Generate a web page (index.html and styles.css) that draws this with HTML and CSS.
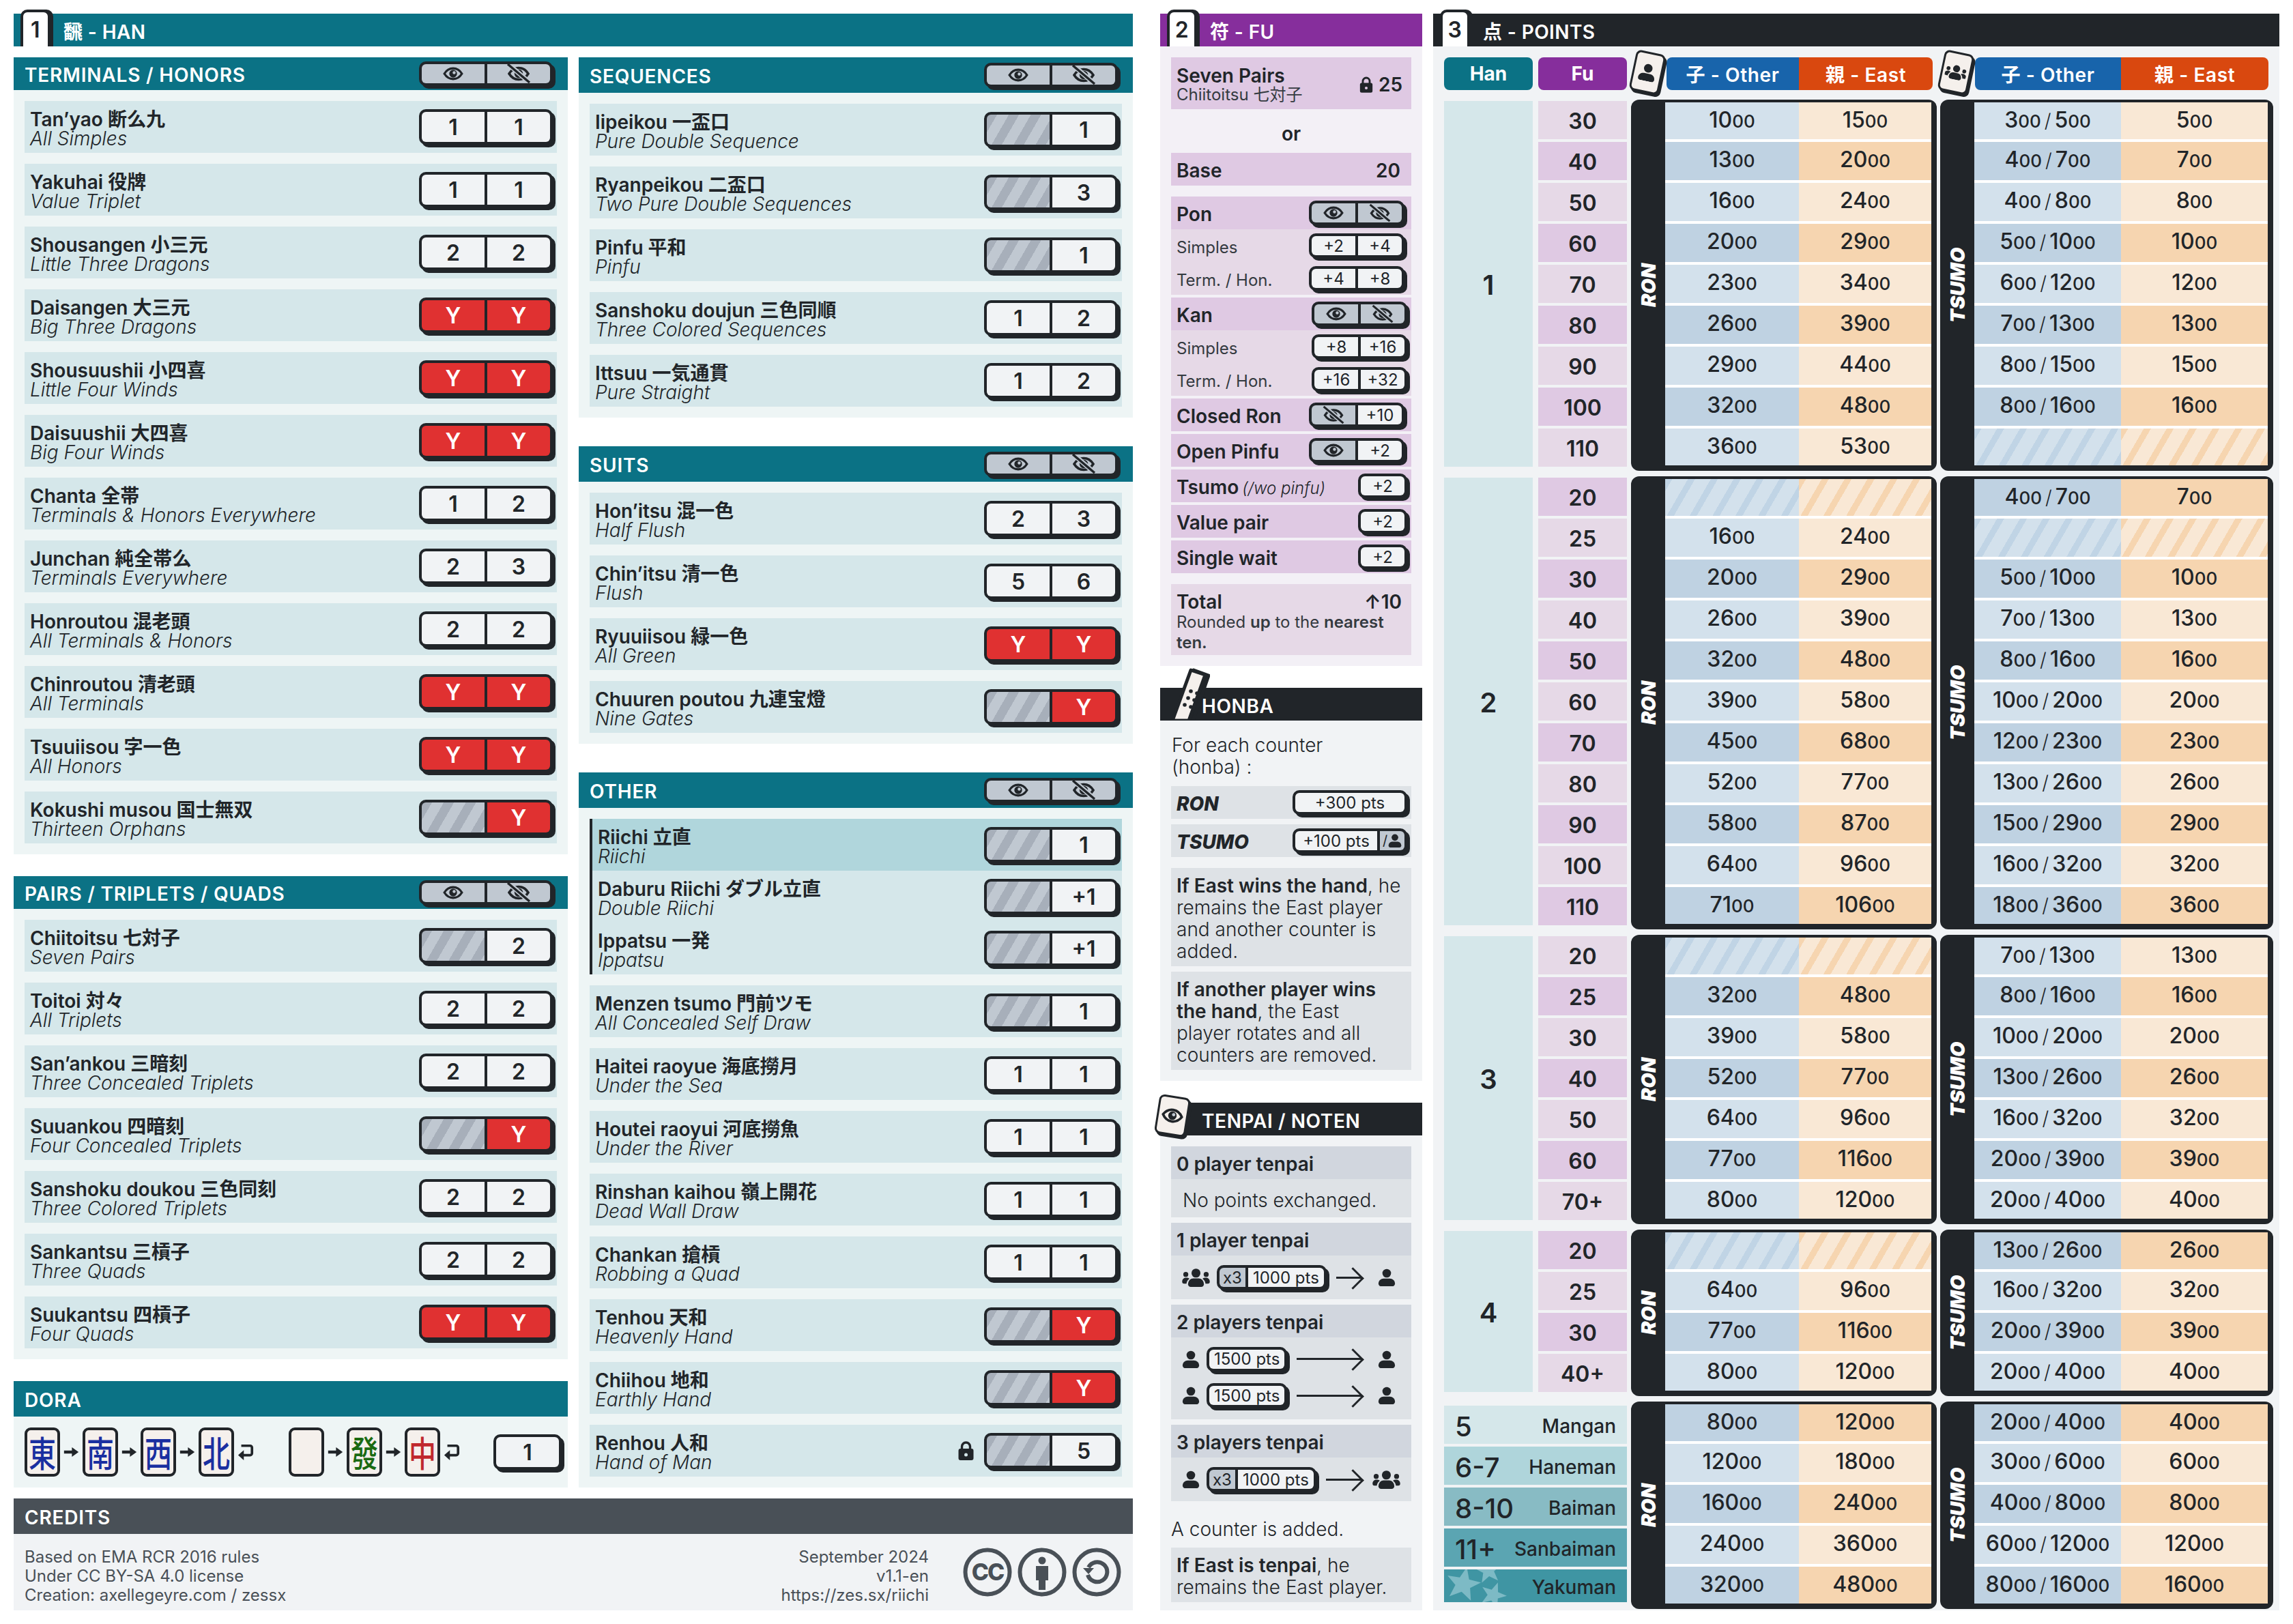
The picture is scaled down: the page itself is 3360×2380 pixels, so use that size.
FILE: index.html
```html
<!DOCTYPE html>
<html lang="en">

<head>
    <meta charset="UTF-8">
    <title>Riichi cheat sheet</title>
    <link rel="stylesheet" href="styles.css">
</head>

<body>
    <svg class="defs" width="0" height="0">
        <symbol id="eye" viewBox="0 0 32 24">
            <path d="M2 12C6 5.500 10.500 3.500 16 3.500s10 2 14 8.500c-4 6.500-8.500 8.500-14 8.500S6 18.500 2 12z" fill="none" stroke="currentColor" stroke-width="3.600" />
            <circle cx="16" cy="12" r="6.200" fill="currentColor" />
            <circle cx="17.600" cy="10.400" r="2.400" fill="#c0c8d1" />
        </symbol>
        <symbol id="eye-off" viewBox="0 0 40 30" overflow="visible">
            <path d="M6 15C10 8.500 14.500 6.500 20 6.500s10 2 14 8.500c-4 6.500-8.500 8.500-14 8.500S10 21.500 6 15z" fill="none" stroke="currentColor" stroke-width="3.600" />
            <circle cx="20" cy="15" r="6.200" fill="currentColor" />
            <path d="M5 1l31 27" stroke="#c0c8d1" stroke-width="7" />
            <path d="M4 1l32 27" stroke="currentColor" stroke-width="3.400" />
        </symbol>
        <symbol id="person" viewBox="0 0 28 28">
            <circle cx="14" cy="7.500" r="6.800" fill="currentColor" />
            <path d="M1 24c0-5 4-8 8-8h10c4 0 8 3 8 8 0 2-1.500 4-3.500 4h-19C2.500 28 1 26 1 24z" fill="currentColor" />
        </symbol>
        <symbol id="group" viewBox="0 0 42 28">
            <circle cx="21" cy="7" r="6.800" fill="currentColor" />
            <circle cx="5.500" cy="9" r="3.800" fill="currentColor" />
            <circle cx="36.500" cy="9" r="3.800" fill="currentColor" />
            <path d="M9 24c0-6 4-9 8-9h8c4 0 8 3 8 9 0 2-2 4-4 4H13c-2 0-4-2-4-4z" fill="currentColor" />
            <path d="M0 20c0-4 3-6 6-6 2 0 4 .5 5 1.500-2.500 2-4 4-4.500 7.500H3c-2 0-3-1-3-3z" fill="currentColor" />
            <path d="M42 20c0-4-3-6-6-6-2 0-4 .5-5 1.500 2.500 2 4 4 4.500 7.500H39c2 0 3-1 3-3z" fill="currentColor" />
        </symbol>
        <symbol id="lock" viewBox="0 0 24 28">
            <path d="M6 13V8a6 6 0 0 1 12 0v5" fill="none" stroke="currentColor" stroke-width="3.400" />
            <path fill-rule="evenodd" d="M4 11h16a3 3 0 0 1 3 3v11a3 3 0 0 1-3 3H4a3 3 0 0 1-3-3V14a3 3 0 0 1 3-3zm8 6.500a2.500 2.500 0 1 0 0 5 2.500 2.500 0 0 0 0-5z" fill="currentColor" />
        </symbol>
        <symbol id="next" viewBox="0 0 24 18">
            <path d="M0 9h15" stroke="currentColor" stroke-width="5" />
            <path d="M13 1l11 8-11 8z" fill="currentColor" />
        </symbol>
        <symbol id="back" viewBox="0 0 26 26">
            <path d="M6 3h14a3 3 0 0 1 3 3v9a3 3 0 0 1-3 3H8" fill="none" stroke="currentColor" stroke-width="4" />
            <path d="M10 10L1 18l9 8z" fill="currentColor" />
        </symbol>
    </svg>

    <main class="sheet">

        <section class="sec sec-han">
            <h1 class="band teal"><span class="tab">1</span>飜 - HAN</h1>
            <div class="cols">
                <div class="col col-a">
                    <div class="panel">
                        <h2 class="phead">TERMINALS / HONORS
                            <span class="pill"><span class="c h"><svg class="ico-eye"><use href="#eye" /></svg></span><span class="c h"><svg class="ico-off"><use href="#eye-off" /></svg></span></span>
                        </h2>
                        <div class="pbody">
                            <div class="row"><div class="txt"><b>Tan’yao 断么九</b><i>All Simples</i></div><div class="pill"><span class="c">1</span><span class="c">1</span></div></div>
                            <div class="row"><div class="txt"><b>Yakuhai 役牌</b><i>Value Triplet</i></div><div class="pill"><span class="c">1</span><span class="c">1</span></div></div>
                            <div class="row"><div class="txt"><b>Shousangen 小三元</b><i>Little Three Dragons</i></div><div class="pill"><span class="c">2</span><span class="c">2</span></div></div>
                            <div class="row"><div class="txt"><b>Daisangen 大三元</b><i>Big Three Dragons</i></div><div class="pill"><span class="c y">Y</span><span class="c y">Y</span></div></div>
                            <div class="row"><div class="txt"><b>Shousuushii 小四喜</b><i>Little Four Winds</i></div><div class="pill"><span class="c y">Y</span><span class="c y">Y</span></div></div>
                            <div class="row"><div class="txt"><b>Daisuushii 大四喜</b><i>Big Four Winds</i></div><div class="pill"><span class="c y">Y</span><span class="c y">Y</span></div></div>
                            <div class="row"><div class="txt"><b>Chanta 全帯</b><i>Terminals &amp; Honors Everywhere</i></div><div class="pill"><span class="c">1</span><span class="c">2</span></div></div>
                            <div class="row"><div class="txt"><b>Junchan 純全帯么</b><i>Terminals Everywhere</i></div><div class="pill"><span class="c">2</span><span class="c">3</span></div></div>
                            <div class="row"><div class="txt"><b>Honroutou 混老頭</b><i>All Terminals &amp; Honors</i></div><div class="pill"><span class="c">2</span><span class="c">2</span></div></div>
                            <div class="row"><div class="txt"><b>Chinroutou 清老頭</b><i>All Terminals</i></div><div class="pill"><span class="c y">Y</span><span class="c y">Y</span></div></div>
                            <div class="row"><div class="txt"><b>Tsuuiisou 字一色</b><i>All Honors</i></div><div class="pill"><span class="c y">Y</span><span class="c y">Y</span></div></div>
                            <div class="row"><div class="txt"><b>Kokushi musou 国士無双</b><i>Thirteen Orphans</i></div><div class="pill"><span class="c off"></span><span class="c y">Y</span></div></div>
                        </div>
                    </div>

                    <div class="panel">
                        <h2 class="phead">PAIRS / TRIPLETS / QUADS
                            <span class="pill"><span class="c h"><svg class="ico-eye"><use href="#eye" /></svg></span><span class="c h"><svg class="ico-off"><use href="#eye-off" /></svg></span></span>
                        </h2>
                        <div class="pbody">
                            <div class="row"><div class="txt"><b>Chiitoitsu 七対子</b><i>Seven Pairs</i></div><div class="pill"><span class="c off"></span><span class="c">2</span></div></div>
                            <div class="row"><div class="txt"><b>Toitoi 対々</b><i>All Triplets</i></div><div class="pill"><span class="c">2</span><span class="c">2</span></div></div>
                            <div class="row"><div class="txt"><b>San’ankou 三暗刻</b><i>Three Concealed Triplets</i></div><div class="pill"><span class="c">2</span><span class="c">2</span></div></div>
                            <div class="row"><div class="txt"><b>Suuankou 四暗刻</b><i>Four Concealed Triplets</i></div><div class="pill"><span class="c off"></span><span class="c y">Y</span></div></div>
                            <div class="row"><div class="txt"><b>Sanshoku doukou 三色同刻</b><i>Three Colored Triplets</i></div><div class="pill"><span class="c">2</span><span class="c">2</span></div></div>
                            <div class="row"><div class="txt"><b>Sankantsu 三槓子</b><i>Three Quads</i></div><div class="pill"><span class="c">2</span><span class="c">2</span></div></div>
                            <div class="row"><div class="txt"><b>Suukantsu 四槓子</b><i>Four Quads</i></div><div class="pill"><span class="c y">Y</span><span class="c y">Y</span></div></div>
                        </div>
                    </div>

                    <div class="panel">
                        <h2 class="phead tall">DORA</h2>
                        <div class="dora">
                            <span class="mj"><span>東</span></span><svg class="nx"><use href="#next" /></svg>
                            <span class="mj"><span>南</span></span><svg class="nx"><use href="#next" /></svg>
                            <span class="mj"><span>西</span></span><svg class="nx"><use href="#next" /></svg>
                            <span class="mj"><span>北</span></span><svg class="bk"><use href="#back" /></svg>
                            <span class="mj white"></span><svg class="nx"><use href="#next" /></svg>
                            <span class="mj green"><span>發</span></span><svg class="nx"><use href="#next" /></svg>
                            <span class="mj red"><span>中</span></span><svg class="bk"><use href="#back" /></svg>
                            <span class="pill one"><span class="c">1</span></span>
                        </div>
                    </div>
                </div>

                <div class="col col-b">
                    <div class="panel">
                        <h2 class="phead tall">SEQUENCES
                            <span class="pill"><span class="c h"><svg class="ico-eye"><use href="#eye" /></svg></span><span class="c h"><svg class="ico-off"><use href="#eye-off" /></svg></span></span>
                        </h2>
                        <div class="pbody">
                            <div class="row"><div class="txt"><b>Iipeikou 一盃口</b><i>Pure Double Sequence</i></div><div class="pill"><span class="c off"></span><span class="c">1</span></div></div>
                            <div class="row"><div class="txt"><b>Ryanpeikou 二盃口</b><i>Two Pure Double Sequences</i></div><div class="pill"><span class="c off"></span><span class="c">3</span></div></div>
                            <div class="row"><div class="txt"><b>Pinfu 平和</b><i>Pinfu</i></div><div class="pill"><span class="c off"></span><span class="c">1</span></div></div>
                            <div class="row"><div class="txt"><b>Sanshoku doujun 三色同順</b><i>Three Colored Sequences</i></div><div class="pill"><span class="c">1</span><span class="c">2</span></div></div>
                            <div class="row"><div class="txt"><b>Ittsuu 一気通貫</b><i>Pure Straight</i></div><div class="pill"><span class="c">1</span><span class="c">2</span></div></div>
                        </div>
                    </div>

                    <div class="panel">
                        <h2 class="phead tall">SUITS
                            <span class="pill"><span class="c h"><svg class="ico-eye"><use href="#eye" /></svg></span><span class="c h"><svg class="ico-off"><use href="#eye-off" /></svg></span></span>
                        </h2>
                        <div class="pbody">
                            <div class="row"><div class="txt"><b>Hon’itsu 混一色</b><i>Half Flush</i></div><div class="pill"><span class="c">2</span><span class="c">3</span></div></div>
                            <div class="row"><div class="txt"><b>Chin’itsu 清一色</b><i>Flush</i></div><div class="pill"><span class="c">5</span><span class="c">6</span></div></div>
                            <div class="row"><div class="txt"><b>Ryuuiisou 緑一色</b><i>All Green</i></div><div class="pill"><span class="c y">Y</span><span class="c y">Y</span></div></div>
                            <div class="row"><div class="txt"><b>Chuuren poutou 九連宝燈</b><i>Nine Gates</i></div><div class="pill"><span class="c off"></span><span class="c y">Y</span></div></div>
                        </div>
                    </div>

                    <div class="panel">
                        <h2 class="phead tall">OTHER
                            <span class="pill"><span class="c h"><svg class="ico-eye"><use href="#eye" /></svg></span><span class="c h"><svg class="ico-off"><use href="#eye-off" /></svg></span></span>
                        </h2>
                        <div class="pbody">
                            <div class="riichi">
                                <div class="row hi"><div class="txt"><b>Riichi 立直</b><i>Riichi</i></div><div class="pill"><span class="c off"></span><span class="c">1</span></div></div>
                                <div class="row"><div class="txt"><b>Daburu Riichi ダブル立直</b><i>Double Riichi</i></div><div class="pill"><span class="c off"></span><span class="c">+1</span></div></div>
                                <div class="row"><div class="txt"><b>Ippatsu 一発</b><i>Ippatsu</i></div><div class="pill"><span class="c off"></span><span class="c">+1</span></div></div>
                            </div>
                            <div class="row"><div class="txt"><b>Menzen tsumo 門前ツモ</b><i>All Concealed Self Draw</i></div><div class="pill"><span class="c off"></span><span class="c">1</span></div></div>
                            <div class="row"><div class="txt"><b>Haitei raoyue 海底撈月</b><i>Under the Sea</i></div><div class="pill"><span class="c">1</span><span class="c">1</span></div></div>
                            <div class="row"><div class="txt"><b>Houtei raoyui 河底撈魚</b><i>Under the River</i></div><div class="pill"><span class="c">1</span><span class="c">1</span></div></div>
                            <div class="row"><div class="txt"><b>Rinshan kaihou 嶺上開花</b><i>Dead Wall Draw</i></div><div class="pill"><span class="c">1</span><span class="c">1</span></div></div>
                            <div class="row"><div class="txt"><b>Chankan 搶槓</b><i>Robbing a Quad</i></div><div class="pill"><span class="c">1</span><span class="c">1</span></div></div>
                            <div class="row"><div class="txt"><b>Tenhou 天和</b><i>Heavenly Hand</i></div><div class="pill"><span class="c off"></span><span class="c y">Y</span></div></div>
                            <div class="row"><div class="txt"><b>Chiihou 地和</b><i>Earthly Hand</i></div><div class="pill"><span class="c off"></span><span class="c y">Y</span></div></div>
                            <div class="row"><div class="txt"><b>Renhou 人和</b><i>Hand of Man</i></div><svg class="ico-lock"><use href="#lock" /></svg><div class="pill"><span class="c off"></span><span class="c">5</span></div></div>
                        </div>
                    </div>
                </div>
            </div>

            <div class="credits">
                <h2 class="phead tall">CREDITS</h2>
                <div class="cbody">
                    <p>Based on EMA RCR 2016 rules<br>Under CC BY-SA 4.0 license<br>Creation: axellegeyre.com / zessx</p>
                    <p class="cright">September 2024<br>v1.1-en<br>https://zes.sx/riichi</p>
                    <div class="cc">
                        <svg viewBox="0 0 72 72"><circle cx="36" cy="36" r="32.500" fill="none" stroke="#495057" stroke-width="6" /><text x="36" y="48" text-anchor="middle" class="cc-t">CC</text></svg>
                        <svg viewBox="0 0 72 72"><circle cx="36" cy="36" r="32.500" fill="none" stroke="#495057" stroke-width="6" /><circle cx="36" cy="19" r="5.500" fill="#495057" /><path d="M27 27h18v21h-4v14H31V48h-4z" fill="#495057" /></svg>
                        <svg viewBox="0 0 72 72"><circle cx="36" cy="36" r="32.500" fill="none" stroke="#495057" stroke-width="6" /><path d="M23 40a14.500 14.500 0 1 0 1-11" fill="none" stroke="#495057" stroke-width="6" /><path d="M16 30h16l-8 9z" fill="#495057" /></svg>
                    </div>
                </div>
            </div>
        </section>

        <section class="sec sec-fu">
            <h1 class="band grape"><span class="tab">2</span>符 - FU</h1>
            <div class="fubody">
                <div class="fr dk r76"><div class="txt"><b>Seven Pairs</b><small>Chiitoitsu 七対子</small></div><b class="val"><svg class="ico-lock sm"><use href="#lock" /></svg>25</b></div>
                <div class="fr-or">or</div>
                <div class="fr dk"><b>Base</b><b class="val base">20</b></div>

                <div class="fgroup mt16">
                    <div class="fr dk"><b>Pon</b><span class="pill mini"><span class="c h"><svg class="ico-eye"><use href="#eye" /></svg></span><span class="c h"><svg class="ico-off"><use href="#eye-off" /></svg></span></span></div>
                    <div class="fr lt"><small>Simples</small><span class="pill mini"><span class="c">+2</span><span class="c">+4</span></span></div>
                    <div class="fr lt"><small>Term. / Hon.</small><span class="pill mini"><span class="c">+4</span><span class="c">+8</span></span></div>
                </div>
                <div class="fgroup far">
                    <div class="fr dk"><b>Kan</b><span class="pill mini"><span class="c h"><svg class="ico-eye"><use href="#eye" /></svg></span><span class="c h"><svg class="ico-off"><use href="#eye-off" /></svg></span></span></div>
                    <div class="fr lt"><small>Simples</small><span class="pill mini"><span class="c">+8</span><span class="c">+16</span></span></div>
                    <div class="fr lt"><small>Term. / Hon.</small><span class="pill mini"><span class="c">+16</span><span class="c">+32</span></span></div>
                </div>
                <div class="fr dk"><b>Closed Ron</b><span class="pill mini"><span class="c h"><svg class="ico-off"><use href="#eye-off" /></svg></span><span class="c">+10</span></span></div>
                <div class="fr dk"><b>Open Pinfu</b><span class="pill mini"><span class="c h"><svg class="ico-eye"><use href="#eye" /></svg></span><span class="c">+2</span></span></div>
                <div class="fr dk"><span><b>Tsumo</b><em>(/wo pinfu)</em></span><span class="pill mini one"><span class="c">+2</span></span></div>
                <div class="fr dk"><b>Value pair</b><span class="pill mini one"><span class="c">+2</span></span></div>
                <div class="fr dk"><b>Single wait</b><span class="pill mini one"><span class="c">+2</span></span></div>

                <div class="total">
                    <div class="total-top"><b>Total</b><b class="val base">↑10</b></div>
                    <small>Rounded <b>up</b> to the <b>nearest ten.</b></small>
                </div>
            </div>

            <h2 class="subband"><svg class="stick" viewBox="0 0 64 80">
                    <path d="M40 6L62 14 39 80H16z" fill="#212529" stroke="#212529" stroke-width="5" stroke-linejoin="round" />
                    <path d="M36 6L57 13 33 80H9z" fill="#f5f0ec" stroke="#212529" stroke-width="5" stroke-linejoin="round" />
                    <g fill="#212529"><circle cx="36" cy="37" r="2.800" /><circle cx="45" cy="40" r="2.800" /><circle cx="32" cy="47" r="2.800" /><circle cx="41" cy="50" r="2.800" /><circle cx="27" cy="57" r="2.800" /><circle cx="36" cy="60" r="2.800" /></g>
                </svg>HONBA</h2>
            <div class="graybody honba">
                <p class="note">For each counter<br>(honba) :</p>
                <div class="gr"><b class="hv">RON</b><span class="pill mini wide"><span class="c">+300 pts</span></span></div>
                <div class="gr"><b class="hv">TSUMO</b><span class="pill mini wide"><span class="c grow">+100 pts</span><span class="c h per">/<svg class="ico-person sm"><use href="#person" /></svg></span></span></div>
                <p class="para mt8">
                    <b>If East wins the hand</b>, he remains the East player and another counter is added.
                </p>
                <p class="para">
                    <b>If another player wins the hand</b>, the East<br>player rotates and all counters are removed.
                </p>
            </div>

            <h2 class="subband mt32"><span class="tile tile-t"><svg class="ico-eye lg"><use href="#eye" /></svg></span>TENPAI / NOTEN</h2>
            <div class="graybody tenpai">
                <div class="tgroup">
                    <div class="thead">0 player tenpai</div>
                    <div class="tline none">No points exchanged.</div>
                </div>
                <div class="tgroup">
                    <div class="thead">1 player tenpai</div>
                    <div class="tline">
                        <svg class="ico-group"><use href="#group" /></svg>
                        <span class="pill mini pts"><span class="c h">x3</span><span class="c">1000 pts</span></span>
                        <span class="arrow"></span>
                        <span class="tend"><svg class="ico-person"><use href="#person" /></svg></span>
                    </div>
                </div>
                <div class="tgroup">
                    <div class="thead">2 players tenpai</div>
                    <div class="tline two">
                        <svg class="ico-person"><use href="#person" /></svg>
                        <span class="pill mini pts"><span class="c">1500 pts</span></span>
                        <span class="arrow"></span>
                        <span class="tend"><svg class="ico-person"><use href="#person" /></svg></span>
                    </div>
                    <div class="tline two end2">
                        <svg class="ico-person"><use href="#person" /></svg>
                        <span class="pill mini pts"><span class="c">1500 pts</span></span>
                        <span class="arrow"></span>
                        <span class="tend"><svg class="ico-person"><use href="#person" /></svg></span>
                    </div>
                </div>
                <div class="tgroup">
                    <div class="thead">3 players tenpai</div>
                    <div class="tline">
                        <svg class="ico-person"><use href="#person" /></svg>
                        <span class="pill mini pts"><span class="c h">x3</span><span class="c">1000 pts</span></span>
                        <span class="arrow"></span>
                        <span class="tend"><svg class="ico-group"><use href="#group" /></svg></span>
                    </div>
                </div>
                <p class="note added">A counter is added.</p>
                <p class="para"><b>If East is tenpai</b>, he remains the East player.</p>
            </div>
        </section>

        <section class="sec sec-pts">
            <h1 class="band dark"><span class="tab">3</span>点 - POINTS</h1>
            <div class="ptsbody">
                <div class="thead-row">
                    <div class="th han-h">Han</div>
                    <div class="th fu-h">Fu</div>
                    <div class="th other ron-o"><span class="tile tile-p"><svg class="ico-person"><use href="#person" /></svg></span>子 - Other</div>
                    <div class="th east ron-e">親 - East</div>
                    <div class="th other tsu-o"><span class="tile tile-p tile-g"><svg class="ico-group"><use href="#group" /></svg></span>子 - Other</div>
                    <div class="th east tsu-e">親 - East</div>
                </div>

                <div class="grp">
                    <div class="hancell">1</div>
                    <div class="fucol start-l"><div>30</div><div>40</div><div>50</div><div>60</div><div>70</div><div>80</div><div>90</div><div>100</div><div>110</div></div>
                    <div class="block start-l"><div class="side">RON</div><div class="rows">
                        <div class="pr"><span>10<small>00</small></span><span>15<small>00</small></span></div>
                        <div class="pr"><span>13<small>00</small></span><span>20<small>00</small></span></div>
                        <div class="pr"><span>16<small>00</small></span><span>24<small>00</small></span></div>
                        <div class="pr"><span>20<small>00</small></span><span>29<small>00</small></span></div>
                        <div class="pr"><span>23<small>00</small></span><span>34<small>00</small></span></div>
                        <div class="pr"><span>26<small>00</small></span><span>39<small>00</small></span></div>
                        <div class="pr"><span>29<small>00</small></span><span>44<small>00</small></span></div>
                        <div class="pr"><span>32<small>00</small></span><span>48<small>00</small></span></div>
                        <div class="pr"><span>36<small>00</small></span><span>53<small>00</small></span></div>
                    </div></div>
                    <div class="block tsu start-l"><div class="side">TSUMO</div><div class="rows">
                        <div class="pr"><span>3<small>00</small><i>/</i>5<small>00</small></span><span>5<small>00</small></span></div>
                        <div class="pr"><span>4<small>00</small><i>/</i>7<small>00</small></span><span>7<small>00</small></span></div>
                        <div class="pr"><span>4<small>00</small><i>/</i>8<small>00</small></span><span>8<small>00</small></span></div>
                        <div class="pr"><span>5<small>00</small><i>/</i>10<small>00</small></span><span>10<small>00</small></span></div>
                        <div class="pr"><span>6<small>00</small><i>/</i>12<small>00</small></span><span>12<small>00</small></span></div>
                        <div class="pr"><span>7<small>00</small><i>/</i>13<small>00</small></span><span>13<small>00</small></span></div>
                        <div class="pr"><span>8<small>00</small><i>/</i>15<small>00</small></span><span>15<small>00</small></span></div>
                        <div class="pr"><span>8<small>00</small><i>/</i>16<small>00</small></span><span>16<small>00</small></span></div>
                        <div class="pr na"><span></span><span></span></div>
                    </div></div>
                </div>

                <div class="grp">
                    <div class="hancell">2</div>
                    <div class="fucol start-d"><div>20</div><div>25</div><div>30</div><div>40</div><div>50</div><div>60</div><div>70</div><div>80</div><div>90</div><div>100</div><div>110</div></div>
                    <div class="block start-d"><div class="side">RON</div><div class="rows">
                        <div class="pr na"><span></span><span></span></div>
                        <div class="pr"><span>16<small>00</small></span><span>24<small>00</small></span></div>
                        <div class="pr"><span>20<small>00</small></span><span>29<small>00</small></span></div>
                        <div class="pr"><span>26<small>00</small></span><span>39<small>00</small></span></div>
                        <div class="pr"><span>32<small>00</small></span><span>48<small>00</small></span></div>
                        <div class="pr"><span>39<small>00</small></span><span>58<small>00</small></span></div>
                        <div class="pr"><span>45<small>00</small></span><span>68<small>00</small></span></div>
                        <div class="pr"><span>52<small>00</small></span><span>77<small>00</small></span></div>
                        <div class="pr"><span>58<small>00</small></span><span>87<small>00</small></span></div>
                        <div class="pr"><span>64<small>00</small></span><span>96<small>00</small></span></div>
                        <div class="pr"><span>71<small>00</small></span><span>106<small>00</small></span></div>
                    </div></div>
                    <div class="block tsu start-d"><div class="side">TSUMO</div><div class="rows">
                        <div class="pr"><span>4<small>00</small><i>/</i>7<small>00</small></span><span>7<small>00</small></span></div>
                        <div class="pr na"><span></span><span></span></div>
                        <div class="pr"><span>5<small>00</small><i>/</i>10<small>00</small></span><span>10<small>00</small></span></div>
                        <div class="pr"><span>7<small>00</small><i>/</i>13<small>00</small></span><span>13<small>00</small></span></div>
                        <div class="pr"><span>8<small>00</small><i>/</i>16<small>00</small></span><span>16<small>00</small></span></div>
                        <div class="pr"><span>10<small>00</small><i>/</i>20<small>00</small></span><span>20<small>00</small></span></div>
                        <div class="pr"><span>12<small>00</small><i>/</i>23<small>00</small></span><span>23<small>00</small></span></div>
                        <div class="pr"><span>13<small>00</small><i>/</i>26<small>00</small></span><span>26<small>00</small></span></div>
                        <div class="pr"><span>15<small>00</small><i>/</i>29<small>00</small></span><span>29<small>00</small></span></div>
                        <div class="pr"><span>16<small>00</small><i>/</i>32<small>00</small></span><span>32<small>00</small></span></div>
                        <div class="pr"><span>18<small>00</small><i>/</i>36<small>00</small></span><span>36<small>00</small></span></div>
                    </div></div>
                </div>

                <div class="grp">
                    <div class="hancell">3</div>
                    <div class="fucol start-l"><div>20</div><div>25</div><div>30</div><div>40</div><div>50</div><div>60</div><div>70+</div></div>
                    <div class="block start-l"><div class="side">RON</div><div class="rows">
                        <div class="pr na"><span></span><span></span></div>
                        <div class="pr"><span>32<small>00</small></span><span>48<small>00</small></span></div>
                        <div class="pr"><span>39<small>00</small></span><span>58<small>00</small></span></div>
                        <div class="pr"><span>52<small>00</small></span><span>77<small>00</small></span></div>
                        <div class="pr"><span>64<small>00</small></span><span>96<small>00</small></span></div>
                        <div class="pr"><span>77<small>00</small></span><span>116<small>00</small></span></div>
                        <div class="pr"><span>80<small>00</small></span><span>120<small>00</small></span></div>
                    </div></div>
                    <div class="block tsu start-l"><div class="side">TSUMO</div><div class="rows">
                        <div class="pr"><span>7<small>00</small><i>/</i>13<small>00</small></span><span>13<small>00</small></span></div>
                        <div class="pr"><span>8<small>00</small><i>/</i>16<small>00</small></span><span>16<small>00</small></span></div>
                        <div class="pr"><span>10<small>00</small><i>/</i>20<small>00</small></span><span>20<small>00</small></span></div>
                        <div class="pr"><span>13<small>00</small><i>/</i>26<small>00</small></span><span>26<small>00</small></span></div>
                        <div class="pr"><span>16<small>00</small><i>/</i>32<small>00</small></span><span>32<small>00</small></span></div>
                        <div class="pr"><span>20<small>00</small><i>/</i>39<small>00</small></span><span>39<small>00</small></span></div>
                        <div class="pr"><span>20<small>00</small><i>/</i>40<small>00</small></span><span>40<small>00</small></span></div>
                    </div></div>
                </div>

                <div class="grp">
                    <div class="hancell">4</div>
                    <div class="fucol start-d"><div>20</div><div>25</div><div>30</div><div>40+</div></div>
                    <div class="block start-d"><div class="side">RON</div><div class="rows">
                        <div class="pr na"><span></span><span></span></div>
                        <div class="pr"><span>64<small>00</small></span><span>96<small>00</small></span></div>
                        <div class="pr"><span>77<small>00</small></span><span>116<small>00</small></span></div>
                        <div class="pr"><span>80<small>00</small></span><span>120<small>00</small></span></div>
                    </div></div>
                    <div class="block tsu start-d"><div class="side">TSUMO</div><div class="rows">
                        <div class="pr"><span>13<small>00</small><i>/</i>26<small>00</small></span><span>26<small>00</small></span></div>
                        <div class="pr"><span>16<small>00</small><i>/</i>32<small>00</small></span><span>32<small>00</small></span></div>
                        <div class="pr"><span>20<small>00</small><i>/</i>39<small>00</small></span><span>39<small>00</small></span></div>
                        <div class="pr"><span>20<small>00</small><i>/</i>40<small>00</small></span><span>40<small>00</small></span></div>
                    </div></div>
                </div>

                <div class="grp">
                    <div class="limits">
                        <div class="lim l5"><b>5</b><span>Mangan</span></div>
                        <div class="lim l6"><b>6-7</b><span>Haneman</span></div>
                        <div class="lim l8"><b>8-10</b><span>Baiman</span></div>
                        <div class="lim l11"><b>11+</b><span>Sanbaiman</span></div>
                        <div class="lim l13">
                            <svg class="stars" viewBox="0 0 268 48">
                                <polygon points="0,-26 7,-9 25,-8 11,3 16,21 0,11 -16,21 -11,3 -25,-8 -7,-9" transform="translate(28 22) rotate(12)" />
                                <polygon points="0,-20 5,-7 19,-6 8,2 12,16 0,8 -12,16 -8,2 -19,-6 -5,-7" transform="translate(65 2) rotate(-8)" />
                                <polygon points="0,-20 5,-7 19,-6 8,2 12,16 0,8 -12,16 -8,2 -19,-6 -5,-7" transform="translate(72 38) rotate(20)" />
                            </svg>
                            <span>Yakuman</span>
                        </div>
                    </div>
                    <div class="block start-d"><div class="side">RON</div><div class="rows">
                        <div class="pr"><span>80<small>00</small></span><span>120<small>00</small></span></div>
                        <div class="pr"><span>120<small>00</small></span><span>180<small>00</small></span></div>
                        <div class="pr"><span>160<small>00</small></span><span>240<small>00</small></span></div>
                        <div class="pr"><span>240<small>00</small></span><span>360<small>00</small></span></div>
                        <div class="pr"><span>320<small>00</small></span><span>480<small>00</small></span></div>
                    </div></div>
                    <div class="block tsu start-d"><div class="side">TSUMO</div><div class="rows">
                        <div class="pr"><span>20<small>00</small><i>/</i>40<small>00</small></span><span>40<small>00</small></span></div>
                        <div class="pr"><span>30<small>00</small><i>/</i>60<small>00</small></span><span>60<small>00</small></span></div>
                        <div class="pr"><span>40<small>00</small><i>/</i>80<small>00</small></span><span>80<small>00</small></span></div>
                        <div class="pr"><span>60<small>00</small><i>/</i>120<small>00</small></span><span>120<small>00</small></span></div>
                        <div class="pr"><span>80<small>00</small><i>/</i>160<small>00</small></span><span>160<small>00</small></span></div>
                    </div></div>
                </div>
            </div>
        </section>
    </main>
</body>

</html>
```

FILE: styles.css
```css
* {
    box-sizing: border-box;
}

body {
    margin: 0;
    background: #fff;
    color: #212529;
    font-family: Inter, "Noto Sans CJK JP", sans-serif;
    font-size: 28px;
}

h1,
h2,
p {
    margin: 0;
    font-size: inherit;
}

.defs {
    position: absolute;
}

.sheet {
    display: flex;
    width: 3360px;
    height: 2380px;
    padding: 20px;
}

.sec {
    display: flex;
    flex-direction: column;
}

.sec-han {
    width: 1640px;
    gap: 16px;
}

.sec-fu {
    width: 384px;
    margin-left: 40px;
}

.sec-pts {
    width: 1240px;
    margin-left: 16px;
}

/* section bands */
.band {
    position: relative;
    display: flex;
    align-items: center;
    height: 48px;
    padding: 2px 0 0 73px;
    color: #fff;
    font-weight: 600;
    letter-spacing: 0.4px;
}

.teal {
    background: #0b7285;
}

.grape {
    background: #862e9c;
}

.dark {
    background: #212529;
}

.tab {
    position: absolute;
    left: 10px;
    bottom: 0;
    width: 44px;
    height: 54px;
    border: 4px solid #212529;
    border-bottom: 0;
    border-radius: 10px 10px 0 0;
    background: #fff;
    box-shadow: 4px 0 0 #212529;
    color: #212529;
    font-size: 32px;
    line-height: 52px;
    text-align: center;
}

/* left part */
.cols {
    display: flex;
    gap: 16px;
    height: 2096px;
}

.col {
    display: flex;
    flex-direction: column;
    width: 812px;
}

.col-a {
    gap: 32px;
}

.col-b {
    justify-content: space-between;
}

.panel {
    background: #eef5f5;
}

.phead {
    display: flex;
    align-items: center;
    justify-content: space-between;
    height: 48px;
    padding: 4px 22px 0 16px;
    background: #0b7285;
    color: #fff;
    font-weight: 600;
    letter-spacing: 0.8px;
}

.phead.tall {
    height: 52px;
}

.pbody {
    display: flex;
    flex-direction: column;
    gap: 16px;
    padding: 16px;
}

.row {
    display: flex;
    align-items: center;
    height: 76px;
    padding: 0 6px 0 8px;
    background: #d5e7ea;
}

.hi {
    background: #b0d6dc;
}

.txt {
    flex: 1;
    padding-top: 6px;
    line-height: 28px;
}

.txt b,
.txt i,
.txt small {
    display: block;
}

.txt b {
    font-weight: 600;
}

.txt i {
    font-weight: 300;
}

.riichi {
    border-left: 4px solid #212529;
}

/* toggles */
.pill {
    display: flex;
    gap: 4px;
    flex: none;
    width: 196px;
    height: 52px;
    overflow: hidden;
    border: 4px solid #212529;
    border-radius: 10px;
    background: #212529;
    box-shadow: 4px 4px 0 #212529;
    color: #212529;
    font-size: 32px;
    font-weight: 600;
    letter-spacing: 0;
}

.phead .pill {
    height: 36px;
    margin-top: -4px;
}

.c {
    display: flex;
    flex: 1;
    align-items: center;
    justify-content: center;
    background: #f1f3f5;
}

.c.y {
    background: #e03131;
    color: #fff;
}

.c.h {
    background: #c0c8d1;
}

.c.off {
    background: repeating-linear-gradient(120deg, #a7afba 0 13px, #c0c8d1 13px 28px);
}

.ico-eye {
    width: 30px;
    height: 22px;
}

.ico-off {
    width: 40px;
    height: 30px;
    overflow: visible;
}

.ico-lock {
    flex: none;
    width: 25px;
    height: 28px;
    margin-right: 14px;
}

.ico-lock.sm {
    width: 20px;
    height: 24px;
    margin-right: 8px;
}

.ico-person {
    flex: none;
    width: 26px;
    height: 26px;
}

.ico-person.sm {
    width: 20px;
    height: 20px;
}

.ico-group {
    flex: none;
    width: 41px;
    height: 27px;
}

/* dora */
.dora {
    display: flex;
    align-items: center;
    height: 104px;
    padding: 0 14px 0 16px;
}

.mj {
    display: flex;
    flex: none;
    align-items: center;
    justify-content: center;
    width: 52px;
    height: 72px;
    border: 4px solid #212529;
    border-radius: 9px;
    background: #f5f0ec;
    color: #1a2fa0;
    font-size: 40px;
    font-weight: 500;
}

.mj span {
    transform: scaleY(1.3);
}

.mj.green {
    color: #1b6a12;
}

.mj.red {
    color: #c0282d;
}

.nx {
    flex: none;
    width: 25px;
    height: 16px;
    margin: 0 4px;
}

.bk {
    flex: none;
    width: 26px;
    height: 24px;
    margin: 0 50px 0 4px;
}

.mj.red + .bk {
    margin-right: 48px;
}

.pill.one {
    width: 100px;
    margin-left: auto;
}

/* credits */
.credits {
    height: 164px;
    background: #f1f3f5;
}

.credits .phead {
    background: #495057;
}

.cbody {
    display: flex;
    align-items: center;
    height: 112px;
    padding: 0 17px 0 16px;
    color: #495057;
    font-size: 24px;
    line-height: 28px;
}

.cbody p {
    padding-top: 12px;
}

.cright {
    margin-left: auto;
    text-align: right;
}

.cc {
    display: flex;
    gap: 8px;
    margin-left: 50px;
}

.cc svg {
    width: 72px;
    height: 72px;
}

.cc-t {
    fill: #495057;
    font-size: 34px;
    font-weight: 800;
    letter-spacing: -2px;
}

/* fu */
.fubody {
    height: 908px;
    padding: 16px;
    background: #f3f0f6;
}

.fr {
    display: flex;
    align-items: center;
    justify-content: space-between;
    height: 48px;
    margin-bottom: 4px;
    padding: 0 10px 0 8px;
}

.fr > b,
.fr > small,
.fr > span:first-child {
    padding-top: 4px;
}

.fr b,
.total b,
.thead,
.para b {
    font-weight: 600;
}

.fr small,
.total small {
    color: #343a40;
    font-size: 24px;
}

.dk {
    background: #dfc9e3;
}

.lt {
    background: #e6d9e7;
}

.r76 {
    height: 76px;
    margin: 0;
    padding-right: 13px;
}

.val {
    display: flex;
    align-items: center;
}

.val.base {
    margin-right: 6px;
}

.fr-or {
    height: 64px;
    font-weight: 600;
    line-height: 72px;
    text-align: center;
}

.mt16 {
    margin-top: 16px;
}

.fgroup {
    margin-bottom: 4px;
}

.fgroup .fr {
    margin: 0;
}

.far .fr {
    padding-right: 6px;
}

.pill.mini {
    width: 140px;
    height: 36px;
    font-size: 24px;
    font-weight: 400;
}

.pill.mini.one {
    width: 72px;
    margin-right: -4px;
}

.pill.mini .ico-off {
    width: 36px;
    height: 27px;
}

.pill.mini.wide {
    width: 168px;
    margin-right: -4px;
}

.grow {
    flex: none;
    width: 120px;
}

.per {
    gap: 1px;
    font-size: 20px;
}

.fr em {
    margin-left: 5px;
    font-size: 24px;
    font-weight: 300;
}

.total {
    height: 104px;
    margin-top: 16px;
    padding: 12px 8px;
    background: #e6d9e7;
    line-height: 28px;
}

.total-top {
    display: flex;
    justify-content: space-between;
}

/* gray sections */
.subband {
    position: relative;
    display: flex;
    align-items: center;
    flex: none;
    height: 48px;
    margin-top: 32px;
    padding: 5px 0 0 61px;
    background: #212529;
    color: #fff;
    font-weight: 600;
    letter-spacing: 0.6px;
}

.stick {
    position: absolute;
    left: 9px;
    bottom: 0;
    width: 64px;
    height: 80px;
    overflow: hidden;
}

.graybody {
    padding: 0 16px;
    background: #f1f3f5;
}

.honba {
    height: 528px;
    padding-top: 20px;
}

.note {
    margin-left: 1px;
    line-height: 32px;
    font-weight: 300;
}

.gr {
    display: flex;
    align-items: center;
    justify-content: space-between;
    height: 48px;
    margin-top: 8px;
    padding: 0 10px 0 8px;
    background: #dee2e6;
}

.note + .gr {
    margin-top: 12px;
}

.hv {
    padding-top: 4px;
    font-style: italic;
    font-weight: 800;
}

.para {
    margin-top: 8px;
    padding: 10px 8px 6px;
    background: #dee2e6;
    font-weight: 300;
    line-height: 32px;
}

.mt8 {
    margin-top: 16px;
}

.tenpai {
    flex: 1;
    padding-top: 16px;
}

.tgroup {
    margin-bottom: 8px;
    background: #dee2e6;
}

.thead {
    height: 48px;
    padding-left: 8px;
    background: #d1d6de;
    line-height: 52px;
}

.tline {
    display: flex;
    align-items: center;
    gap: 10px;
    height: 64px;
    padding: 0 16px;
}

.tline.none {
    height: 56px;
    padding: 5px 0 0 17px;
    font-weight: 300;
}

.tline.two {
    height: 56px;
    padding-top: 7px;
}

.tline.end2 {
    height: 64px;
    padding: 0 16px 6px;
}

.pill.mini.pts {
    width: auto;
    margin-right: 4px;
}

.pts .c {
    padding: 0 7px;
    white-space: nowrap;
}

.pts .c.h {
    padding: 0 5px;
    font-size: 24px;
}

.arrow {
    position: relative;
    flex: 1;
    height: 3px;
    margin-right: 6px;
    background: #212529;
}

.arrow::after {
    content: "";
    position: absolute;
    right: 1px;
    top: -9px;
    width: 20px;
    height: 20px;
    border-top: 3px solid #212529;
    border-right: 3px solid #212529;
    transform: rotate(45deg);
}

.tend {
    display: flex;
    flex: none;
    justify-content: center;
    width: 41px;
}

.added {
    margin: 25px 0 11px;
}

/* tiles over the headers */
.tile {
    position: absolute;
    display: flex;
    align-items: center;
    justify-content: center;
    border: 3px solid #212529;
    border-radius: 8px;
    background: #f5f0ec;
    box-shadow: 3px 3px 0 #212529;
    color: #212529;
}

.tile-t {
    left: -5px;
    bottom: 0;
    width: 46px;
    height: 58px;
    transform: rotate(9deg);
}

.tile-t .lg {
    width: 32px;
    height: 24px;
}

.tile-p {
    left: -50px;
    top: -8px;
    z-index: 2;
    width: 44px;
    height: 60px;
    transform: rotate(12deg);
}

.tile-g {
    left: -50px;
}

.tile-g .ico-group {
    width: 32px;
    height: 22px;
}

/* points table */
.ptsbody {
    flex: 1;
    display: flex;
    flex-direction: column;
    gap: 16px;
    padding: 16px 16px 0;
    background: #f1f3f5;
}

.thead-row {
    display: flex;
    height: 48px;
}

.th {
    position: relative;
    display: flex;
    align-items: center;
    justify-content: center;
    border-radius: 8px;
    color: #fff;
    font-weight: 600;
}

.han-h {
    width: 130px;
    background: #0b7285;
    font-weight: 700;
}

.fu-h {
    width: 130px;
    margin-left: 8px;
    background: #862e9c;
    font-weight: 700;
}

.other {
    background: #1864ab;
    border-radius: 8px 0 0 8px;
    letter-spacing: 0.6px;
}

.east {
    background: #d9480f;
    border-radius: 0 8px 8px 0;
    letter-spacing: 0.6px;
}

.ron-o {
    width: 194px;
    margin-left: 58px;
}

.ron-e {
    width: 196px;
}

.tsu-o {
    width: 214px;
    margin-left: 62px;
}

.tsu-e {
    width: 216px;
}

.grp {
    display: flex;
    align-items: flex-start;
}

.hancell {
    display: flex;
    align-items: center;
    align-self: stretch;
    justify-content: center;
    flex: none;
    width: 130px;
    padding-top: 3px;
    background: #d5e7ea;
    font-size: 40px;
    font-weight: 600;
}

.fucol {
    display: flex;
    flex-direction: column;
    gap: 4px;
    flex: none;
    width: 130px;
    margin-left: 8px;
}

.fucol div {
    height: 56px;
    font-size: 32px;
    font-weight: 600;
    line-height: 59px;
    text-align: center;
}

.fucol.start-l div:nth-child(odd),
.fucol.start-d div:nth-child(even) {
    background: #e6d9e7;
}

.fucol.start-l div:nth-child(even),
.fucol.start-d div:nth-child(odd) {
    background: #dfc9e3;
}

.block {
    display: flex;
    flex: none;
    width: 448px;
    margin: -2px 0 -6px 6px;
    padding: 4px 8px 8px 50px;
    border-radius: 12px;
    background: #212529;
    position: relative;
}

.block.tsu {
    width: 488px;
    margin-left: 5px;
}

.side {
    position: absolute;
    left: 0;
    top: 0;
    bottom: 0;
    display: flex;
    align-items: center;
    justify-content: center;
    width: 50px;
    color: #fff;
    font-size: 29px;
    font-style: italic;
    font-weight: 900;
    writing-mode: vertical-rl;
    transform: rotate(180deg);
}

.rows {
    display: flex;
    flex-direction: column;
    gap: 4px;
    width: 100%;
    background: #fff;
}

.pr {
    display: grid;
    grid-template-columns: 196px 194px;
    height: 56px;
    font-size: 32px;
    font-weight: 500;
}

.tsu .pr {
    grid-template-columns: 215px 215px;
}

.pr:first-child,
.pr:last-child {
    height: 54px;
}

.pr span {
    display: flex;
    align-items: baseline;
    justify-content: center;
    padding-top: 6px;
}

.pr small {
    font-size: 26px;
}

.pr i {
    margin: 0 5px;
    font-size: 28px;
    font-style: normal;
    font-weight: 300;
}

.start-l .pr:nth-child(odd) span:first-child,
.start-d .pr:nth-child(even) span:first-child {
    background: #d3e1ec;
}

.start-l .pr:nth-child(even) span:first-child,
.start-d .pr:nth-child(odd) span:first-child {
    background: #bfd2e2;
}

.start-l .pr:nth-child(odd) span:last-child,
.start-d .pr:nth-child(even) span:last-child {
    background: #f9e8d5;
}

.start-l .pr:nth-child(even) span:last-child,
.start-d .pr:nth-child(odd) span:last-child {
    background: #f6d5b0;
}

.block .pr.na span:first-child {
    background: repeating-linear-gradient(120deg, #c0d4e5 0 9px, #d3e1ec 9px 29px);
}

.block .pr.na span:last-child {
    background: repeating-linear-gradient(120deg, #f6d5b0 0 9px, #f9e8d5 9px 29px);
}

.limits {
    display: flex;
    flex-direction: column;
    gap: 4px;
    flex: none;
    width: 268px;
    margin-top: 4px;
}

.lim {
    position: relative;
    display: flex;
    align-items: center;
    justify-content: space-between;
    height: 56px;
    padding: 4px 16px 0;
    overflow: hidden;
    font-size: 28px;
    font-weight: 500;
}

.lim b {
    font-size: 40px;
    font-weight: 500;
}

.l5 {
    background: #d5e7ea;
}

.l6 {
    background: #afd5db;
}

.l8 {
    background: #88bbc4;
}

.l11 {
    background: #5ba5b2;
}

.l13 {
    justify-content: flex-end;
    height: 48px;
    background: #3f95a3;
}

.l13 span {
    position: relative;
}

.stars {
    position: absolute;
    left: 0;
    top: 0;
    width: 268px;
    height: 48px;
    fill: #7dbac5;
}
```
